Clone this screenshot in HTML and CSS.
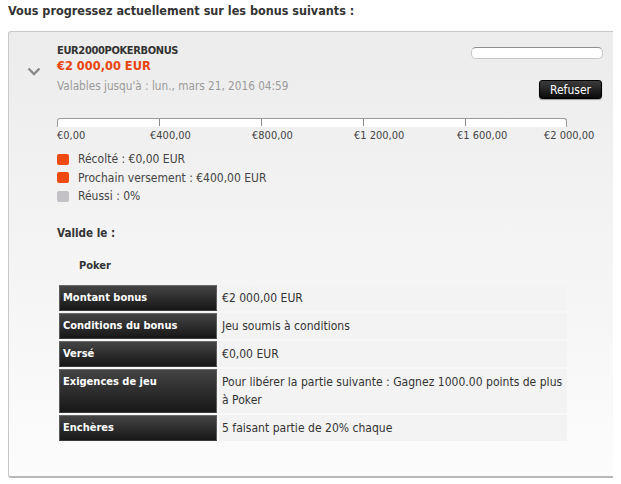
FILE: index.html
```html
<!DOCTYPE html>
<html lang="fr">
<head>
<meta charset="utf-8">
<title>Bonus</title>
<link rel="stylesheet" href="styles.css">
</head>
<body>
<h2 class="page-title">Vous progressez actuellement sur les bonus suivants :</h2>
<div class="bonus-card">
  <div class="gutter">
    <svg class="chevron" width="14" height="9" viewBox="0 0 14 9"><path d="M1.5 1.5 L7 7 L12.5 1.5" fill="none" stroke="#8a8a8a" stroke-width="2.4"/></svg>
  </div>
  <div class="main">
    <div class="header">
      <div class="info">
        <div class="code">EUR2000POKERBONUS</div>
        <div class="amount">€2 000,00 EUR</div>
        <div class="valid">Valables jusqu'à : lun., mars 21, 2016 04:59</div>
      </div>
      <div class="actions">
        <div class="field"></div>
        <button class="btn-refuse">Refuser</button>
      </div>
    </div>

    <div class="scale">
      <div class="bar">
        <span class="seg"></span><span class="seg"></span><span class="seg"></span><span class="seg"></span><span class="seg last"></span>
      </div>
      <div class="labels">
        <span class="lbl" style="left:0px">€0,00</span>
        <span class="lbl" style="left:93px">€400,00</span>
        <span class="lbl" style="left:195px">€800,00</span>
        <span class="lbl" style="left:297px">€1 200,00</span>
        <span class="lbl" style="left:400px">€1 600,00</span>
        <span class="lbl" style="left:487px">€2 000,00</span>
      </div>
    </div>

    <ul class="legend">
      <li><span class="dot orange"></span>Récolté : €0,00 EUR</li>
      <li><span class="dot orange"></span>Prochain versement : €400,00 EUR</li>
      <li><span class="dot grey"></span>Réussi : 0%</li>
    </ul>

    <div class="valid-title">Valide le :</div>
    <div class="game">Poker</div>

    <table class="details">
      <tr><th>Montant bonus</th><td>€2 000,00 EUR</td></tr>
      <tr><th>Conditions du bonus</th><td>Jeu soumis à conditions</td></tr>
      <tr><th>Versé</th><td>€0,00 EUR</td></tr>
      <tr><th>Exigences de jeu</th><td>Pour libérer la partie suivante : Gagnez 1000.00 points de plus à Poker</td></tr>
      <tr><th>Enchères</th><td>5 faisant partie de 20% chaque</td></tr>
    </table>
  </div>
</div>
</body>
</html>
```

FILE: styles.css
```css
html, body {
  background: #ffffff;
}
body {
  margin: 0 8px;
  font-family: Tahoma, "DejaVu Sans Condensed", "DejaVu Sans", sans-serif;
  font-size: 11px;
  color: #333333;
}
.page-title {
  margin: 2px 0 0 0;
  height: 29px;
  font-size: 12.5px;
  line-height: 17px;
  font-weight: bold;
  color: #333333;
}
.bonus-card {
  display: flex;
  width: 609px;
  box-sizing: border-box;
  height: 447px;
  border: 1px solid #c8c8c8;
  border-right-color: #b8b8b8;
  border-bottom: 2px solid #b8b8b8;
  border-radius: 3px;
  background: linear-gradient(#ececec, #fcfcfc);
  padding: 12px 13px 0 0;
}
.gutter {
  width: 48px;
  flex: none;
}
.chevron {
  display: block;
  margin: 23px 0 0 18px;
}
.main {
  flex: 1;
}
.header {
  display: flex;
  justify-content: space-between;
}
.code {
  font-weight: bold;
  line-height: 14px;
  letter-spacing: -0.35px;
  color: #333333;
}
.amount {
  font-size: 12.7px;
  font-weight: bold;
  line-height: 16px;
  color: #e8440f;
}
.valid {
  margin-top: 5px;
  font-size: 11.7px;
  line-height: 14px;
  color: #9a9a9a;
}
.actions {
  display: flex;
  flex-direction: column;
  align-items: flex-end;
}
.field {
  margin-top: 3px;
  width: 130px;
  height: 10px;
  background: #ffffff;
  border: 1px solid #c8c8c8;
  border-top-color: #8f8f8f;
  border-radius: 5px;
}
.btn-refuse {
  margin-top: 21px;
  margin-right: 1px;
  width: 63px;
  height: 19px;
  padding: 0;
  border: 1px solid #000000;
  border-radius: 3px;
  background: linear-gradient(#3c3c3c, #0a0a0a);
  box-shadow: 0 1px 1px rgba(0,0,0,0.35);
  color: #ffffff;
  font-family: inherit;
  font-size: 12px;
  line-height: 16px;
}
.scale {
  margin-top: 19px;
}
.bar {
  display: flex;
  width: 508px;
  height: 8px;
  background: #ffffff;
  border: 1px solid #9a9a9a;
  border-bottom: none;
  border-radius: 3px 3px 0 0;
}
.seg {
  width: 102px;
  height: 7px;
  border-right: 1px solid #8a8a8a;
  box-sizing: border-box;
}
.seg.last {
  border-right: none;
  flex: 1;
}
.labels {
  position: relative;
  height: 14px;
  margin-top: 2px;
  color: #444444;
  line-height: 14px;
}
.lbl {
  position: absolute;
  top: 0;
  white-space: nowrap;
}
.legend {
  list-style: none;
  margin: 7px 0 0 0;
  padding: 0;
}
.legend li {
  display: flex;
  align-items: center;
  height: 18.5px;
  font-size: 12px;
  color: #444444;
}
.dot {
  width: 12px;
  height: 11px;
  border-radius: 2px;
  margin-right: 9px;
}
.dot.orange {
  background: #ef4a12;
}
.dot.grey {
  background: #c3c1c6;
}
.valid-title {
  margin-top: 20px;
  font-size: 11.6px;
  font-weight: bold;
  line-height: 14px;
}
.game {
  margin: 19px 0 0 22px;
  font-weight: bold;
  line-height: 14px;
}
.details {
  margin-top: 10px;
  border-collapse: separate;
  border-spacing: 2px;
  width: 512px;
}
.details th {
  width: 158px;
  box-sizing: border-box;
  padding: 3px 3px 3px 3px;
  vertical-align: top;
  text-align: left;
  line-height: 18px;
  font-weight: bold;
  color: #ffffff;
  background: linear-gradient(#444444, #171717);
  border: 1px solid #5c5c5c;
  border-top-color: #6a6a6a;
  border-bottom-color: #3a3a3a;
}
.details td {
  padding: 4px 1px 4px 3px;
  vertical-align: top;
  line-height: 18px;
  font-size: 12.05px;
  color: #333333;
  background: #f3f3f3;
}
```
